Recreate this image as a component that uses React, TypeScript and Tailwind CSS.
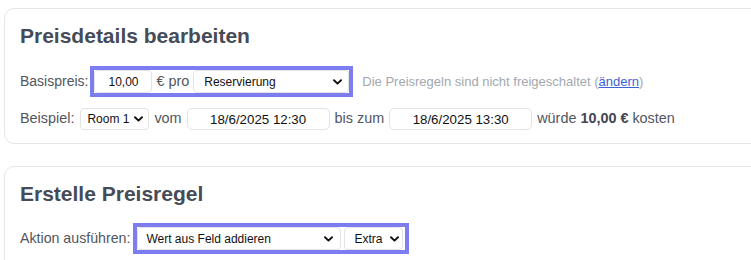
import React from "react";

const font = { fontFamily: '"Liberation Sans", Arial, sans-serif' };

function Chevron() {
  return (
    <svg width="9" height="6" viewBox="0 0 9 6" className="shrink-0">
      <path d="M1 1.2 L4.5 4.6 L8 1.2" fill="none" stroke="#111" strokeWidth="1.9" strokeLinecap="round" strokeLinejoin="round" />
    </svg>
  );
}

function Select({ text, className }: { text: string; className: string }) {
  return (
    <div className={`flex items-center justify-between rounded-[4px] border border-[#e3e3e3] bg-white text-[12px] text-[#111] ${className}`}>
      <span>{text}</span>
      <Chevron />
    </div>
  );
}

function DateInput({ value }: { value: string }) {
  return (
    <input
      readOnly
      value={value}
      className="h-[22px] w-[143px] rounded-[5px] border border-[#e3e3e3] bg-white text-center text-[13.3px] text-[#111] outline-none"
      style={font}
    />
  );
}

export default function App() {
  const card = "w-[790px] rounded-l-[10px] border border-[#e6e6e6] bg-white pl-[15px] pt-[13px]";
  const title = "h-[28px] text-[21px] font-bold leading-[28px] text-[#454b57]";
  const label = "text-[14.4px] text-[#51565f]";

  return (
    <div className="h-[260px] w-full overflow-hidden bg-white pl-[4px] pt-[8px]" style={font}>
      {/* Preisdetails */}
      <section className={`${card} pb-[13px]`}>
        <h2 className={title}>Preisdetails bearbeiten</h2>

        <div className="mt-[16px] flex items-center">
          <span className="text-[14px] text-[#51565f]">Basispreis:</span>
          <div className="ml-[2px] flex items-center border-[4px] border-[#7b7df0] bg-white">
            <input
              readOnly
              value="10,00"
              className="h-[23px] w-[58px] rounded-[4px] border border-[#e3e3e3] bg-white text-center text-[12px] text-[#111] outline-none"
              style={font}
            />
            <span className={`${label} mx-[4px]`}>€ pro</span>
            <Select text="Reservierung" className="h-[23px] w-[156px] pl-[10px] pr-[6px]" />
          </div>
          <span className="ml-[9px] text-[13px] text-[#a3a7ae]">
            Die Preisregeln sind nicht freigeschaltet (
            <span className="text-[#3b63d6] underline">ändern</span>)
          </span>
        </div>

        <div className="mt-[11px] flex items-center gap-[5px]">
          <span className={`${label} mr-[1px]`}>Beispiel:</span>
          <Select text="Room 1" className="h-[22px] w-[69px] pl-[6px] pr-[5px]" />
          <span className={label}>vom</span>
          <DateInput value="18/6/2025 12:30" />
          <span className={label}>bis zum</span>
          <DateInput value="18/6/2025 13:30" />
          <span className={label}>
            würde <b className="font-bold text-[#3f4552]">10,00 €</b> kosten
          </span>
        </div>
      </section>

      {/* Preisregel */}
      <section className={`${card} mt-[22px] pb-[20px]`}>
        <h2 className={title}>Erstelle Preisregel</h2>

        <div className="mt-[15px] flex items-center">
          <span className="text-[14.2px] text-[#51565f]">Aktion ausführen:</span>
          <div className="ml-[3px] flex items-center gap-[3px] border-[4px] border-[#7b7df0] bg-white pr-[2px]">
            <Select text="Wert aus Feld addieren" className="h-[23px] w-[204px] pl-[8px] pr-[7px]" />
            <Select text="Extra" className="h-[23px] w-[59px] pl-[9px] pr-[3px]" />
          </div>
        </div>
      </section>
    </div>
  );
}
